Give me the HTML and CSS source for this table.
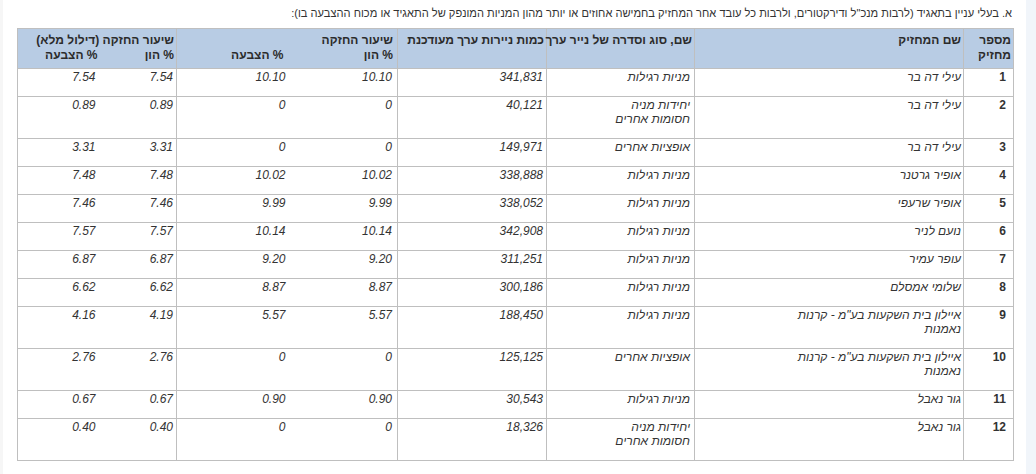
FILE: index.html
```html
<!DOCTYPE html>
<html lang="he" dir="rtl">
<head>
<meta charset="utf-8">
<title>בעלי עניין בתאגיד</title>
<link rel="stylesheet" href="styles.css">
</head>
<body>
<div class="page">
  <div class="edge-left"></div>
  <main class="content">
    <p class="title">א. בעלי עניין בתאגיד (לרבות מנכ"ל ודירקטורים, ולרבות כל עובד אחר המחזיק בחמישה אחוזים או יותר מהון המניות המונפק של התאגיד או מכוח ההצבעה בו):</p>
    <table class="holders">
      <colgroup>
        <col class="w-num"><col class="w-name"><col class="w-type"><col class="w-qty">
        <col class="w-cap"><col class="w-vote"><col class="w-dcap"><col class="w-dvote">
      </colgroup>
      <thead>
        <tr>
          <th class="c-num">מספר<br>מחזיק</th>
          <th class="c-name">שם המחזיק</th>
          <th class="c-type">שם, סוג וסדרה של נייר ערך</th>
          <th class="c-qty">כמות ניירות ערך מעודכנת</th>
          <th class="c-cap grp-r">שיעור החזקה<br>% הון</th>
          <th class="c-vote grp-l">&nbsp;<br>% הצבעה</th>
          <th class="c-dcap grp-r"><span class="over">שיעור החזקה (דילול מלא)</span><br>% הון</th>
          <th class="c-dvote grp-l">&nbsp;<br>% הצבעה</th>
        </tr>
      </thead>
      <tbody>
        <tr><td class="c-num">1</td><td class="c-name">עילי דה בר</td><td class="c-type">מניות רגילות</td><td class="c-qty">341,831</td><td class="c-cap grp-r">10.10</td><td class="c-vote grp-l">10.10</td><td class="c-dcap grp-r">7.54</td><td class="c-dvote grp-l">7.54</td></tr>
        <tr><td class="c-num">2</td><td class="c-name">עילי דה בר</td><td class="c-type">יחידות מניה<br>חסומות אחרים</td><td class="c-qty">40,121</td><td class="c-cap grp-r">0</td><td class="c-vote grp-l">0</td><td class="c-dcap grp-r">0.89</td><td class="c-dvote grp-l">0.89</td></tr>
        <tr><td class="c-num">3</td><td class="c-name">עילי דה בר</td><td class="c-type">אופציות אחרים</td><td class="c-qty">149,971</td><td class="c-cap grp-r">0</td><td class="c-vote grp-l">0</td><td class="c-dcap grp-r">3.31</td><td class="c-dvote grp-l">3.31</td></tr>
        <tr><td class="c-num">4</td><td class="c-name">אופיר גרטנר</td><td class="c-type">מניות רגילות</td><td class="c-qty">338,888</td><td class="c-cap grp-r">10.02</td><td class="c-vote grp-l">10.02</td><td class="c-dcap grp-r">7.48</td><td class="c-dvote grp-l">7.48</td></tr>
        <tr><td class="c-num">5</td><td class="c-name">אופיר שרעפי</td><td class="c-type">מניות רגילות</td><td class="c-qty">338,052</td><td class="c-cap grp-r">9.99</td><td class="c-vote grp-l">9.99</td><td class="c-dcap grp-r">7.46</td><td class="c-dvote grp-l">7.46</td></tr>
        <tr><td class="c-num">6</td><td class="c-name">נועם לניר</td><td class="c-type">מניות רגילות</td><td class="c-qty">342,908</td><td class="c-cap grp-r">10.14</td><td class="c-vote grp-l">10.14</td><td class="c-dcap grp-r">7.57</td><td class="c-dvote grp-l">7.57</td></tr>
        <tr><td class="c-num">7</td><td class="c-name">עופר עמיר</td><td class="c-type">מניות רגילות</td><td class="c-qty">311,251</td><td class="c-cap grp-r">9.20</td><td class="c-vote grp-l">9.20</td><td class="c-dcap grp-r">6.87</td><td class="c-dvote grp-l">6.87</td></tr>
        <tr><td class="c-num">8</td><td class="c-name">שלומי אמסלם</td><td class="c-type">מניות רגילות</td><td class="c-qty">300,186</td><td class="c-cap grp-r">8.87</td><td class="c-vote grp-l">8.87</td><td class="c-dcap grp-r">6.62</td><td class="c-dvote grp-l">6.62</td></tr>
        <tr><td class="c-num">9</td><td class="c-name">איילון בית השקעות בע"מ - קרנות<br>נאמנות</td><td class="c-type">מניות רגילות</td><td class="c-qty">188,450</td><td class="c-cap grp-r">5.57</td><td class="c-vote grp-l">5.57</td><td class="c-dcap grp-r">4.19</td><td class="c-dvote grp-l">4.16</td></tr>
        <tr><td class="c-num">10</td><td class="c-name">איילון בית השקעות בע"מ - קרנות<br>נאמנות</td><td class="c-type">אופציות אחרים</td><td class="c-qty">125,125</td><td class="c-cap grp-r">0</td><td class="c-vote grp-l">0</td><td class="c-dcap grp-r">2.76</td><td class="c-dvote grp-l">2.76</td></tr>
        <tr><td class="c-num">11</td><td class="c-name">גור נאבל</td><td class="c-type">מניות רגילות</td><td class="c-qty">30,543</td><td class="c-cap grp-r">0.90</td><td class="c-vote grp-l">0.90</td><td class="c-dcap grp-r">0.67</td><td class="c-dvote grp-l">0.67</td></tr>
        <tr><td class="c-num">12</td><td class="c-name">גור נאבל</td><td class="c-type">יחידות מניה<br>חסומות אחרים</td><td class="c-qty">18,326</td><td class="c-cap grp-r">0</td><td class="c-vote grp-l">0</td><td class="c-dcap grp-r">0.40</td><td class="c-dvote grp-l">0.40</td></tr>
      </tbody>
    </table>
  </main>
  <div class="edge-right"></div>
</div>
</body>
</html>
```
FILE: styles.css
```css
html, body {
  margin: 0;
  padding: 0;
  background: #ffffff;
}

body {
  font-family: "Liberation Sans", Arial, sans-serif;
  font-size: 12px;
  line-height: 14px;
  color: #333333;
}

.page {
  display: flex;
  flex-direction: row-reverse;
  min-height: 474px;
}

.edge-left {
  width: 3px;
  background: #f6f6f6;
}

.edge-right {
  width: 10px;
  background: #f1f5fa;
}

.content {
  flex: 1;
  padding: 6px 12px 0 14px;
}

.title {
  margin: 0 0 8px 0;
  padding-right: 2px;
  text-align: right;
  font-size: 11.1px;
}

.holders {
  width: 997px;
  border-collapse: collapse;
  table-layout: fixed;
}

.w-num { width: 50px; }
.w-name { width: 269px; }
.w-type { width: 148px; }
.w-qty { width: 149px; }
.w-cap { width: 110px; }
.w-vote { width: 111px; }
.w-dcap { width: 77px; }
.w-dvote { width: 82px; }

.holders th,
.holders td {
  border: 1px solid #bfbfbf;
  text-align: right;
  vertical-align: top;
  white-space: nowrap;
  overflow: visible;
}

.holders th {
  background: #b8cce4;
  font-weight: bold;
  color: #2b2b2b;
  line-height: 15px;
  padding: 4px 2px 5px 2px;
}

.holders td {
  padding: 1px 3px 12px 3px;
  font-style: italic;
  color: #333333;
}

.holders .grp-r { border-left: none; }
.holders .grp-l { border-right: none; }

.holders td.c-num {
  font-style: normal;
  font-weight: bold;
  padding-right: 7px;
}

.holders td.c-name { padding-right: 2px; }
.holders td.c-type { padding-right: 4px; }
.holders td.c-qty { padding-right: 3px; }
.holders td.c-cap { padding-right: 5px; }
.holders td.c-vote { padding-right: 2px; }
.holders td.c-dcap { padding-right: 3px; }
.holders td.c-dvote { padding-right: 4px; }

.holders th.c-cap { padding-right: 4px; }
.holders th.c-vote { padding-right: 4px; }
.holders th.c-dcap { padding-right: 2px; }
.holders th.c-dvote { padding-right: 2px; }

.over {
  position: relative;
  z-index: 1;
}
```
